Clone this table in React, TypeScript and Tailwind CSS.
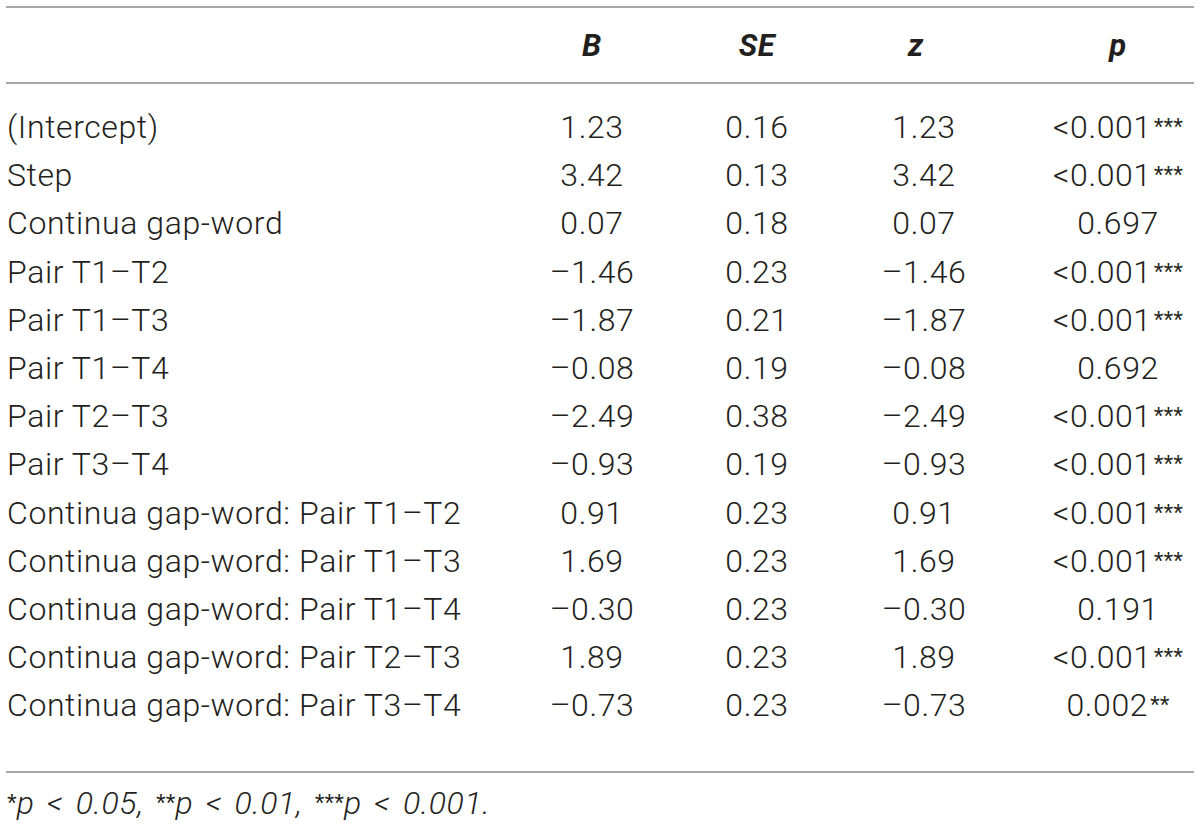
import React from "react";

type Row = { label: string; b: string; se: string; z: string; p: string; stars?: string };

const rows: Row[] = [
  { label: "(Intercept)", b: "1.23", se: "0.16", z: "1.23", p: "<0.001", stars: "***" },
  { label: "Step", b: "3.42", se: "0.13", z: "3.42", p: "<0.001", stars: "***" },
  { label: "Continua gap-word", b: "0.07", se: "0.18", z: "0.07", p: "0.697" },
  { label: "Pair T1–T2", b: "–1.46", se: "0.23", z: "–1.46", p: "<0.001", stars: "***" },
  { label: "Pair T1–T3", b: "–1.87", se: "0.21", z: "–1.87", p: "<0.001", stars: "***" },
  { label: "Pair T1–T4", b: "–0.08", se: "0.19", z: "–0.08", p: "0.692" },
  { label: "Pair T2–T3", b: "–2.49", se: "0.38", z: "–2.49", p: "<0.001", stars: "***" },
  { label: "Pair T3–T4", b: "–0.93", se: "0.19", z: "–0.93", p: "<0.001", stars: "***" },
  { label: "Continua gap-word: Pair T1–T2", b: "0.91", se: "0.23", z: "0.91", p: "<0.001", stars: "***" },
  { label: "Continua gap-word: Pair T1–T3", b: "1.69", se: "0.23", z: "1.69", p: "<0.001", stars: "***" },
  { label: "Continua gap-word: Pair T1–T4", b: "–0.30", se: "0.23", z: "–0.30", p: "0.191" },
  { label: "Continua gap-word: Pair T2–T3", b: "1.89", se: "0.23", z: "1.89", p: "<0.001", stars: "***" },
  { label: "Continua gap-word: Pair T3–T4", b: "–0.73", se: "0.23", z: "–0.73", p: "0.002", stars: "**" },
];

const grid = "grid grid-cols-[504px_164px_166px_168px_186px] items-center";

// asterisks are drawn in Arial-metric font, Roboto's are too small
const Stars: React.FC<{ s: string; className?: string }> = ({ s, className = "" }) => (
  <sup className={`font-['Liberation_Sans',sans-serif] not-italic font-normal text-[25px] relative -top-[2px] tracking-[0px] ${className}`}>
    {s}
  </sup>
);

const App: React.FC = () => {
  return (
    <div className="w-[1200px] h-[826px] bg-white text-[#231f20] font-['Roboto','Liberation_Sans',sans-serif] font-light text-[32px] tracking-[0.6px] leading-none px-[6px] pt-[6px]">
      <div className="border-t-2 border-[#a7a7a7]">
        <div className={`${grid} h-[74px] font-bold italic text-[31px]`}>
          <div></div>
          <div className="text-center">B</div>
          <div className="text-center">SE</div>
          <div className="text-center pr-[16px]">z</div>
          <div className="text-center pl-[34px]">p</div>
        </div>
      </div>
      <div className="border-t-2 border-[#a7a7a7] pt-[19px] pb-[42px]">
        {rows.map(row => (
          <div className={`${grid} h-[48.2px]`} key={row.label}>
            <div className="pl-[1px]">{row.label}</div>
            <div className="text-center">{row.b}</div>
            <div className="text-center">{row.se}</div>
            <div className="text-center">{row.z}</div>
            <div className="text-center pl-[34px]">
              {row.p}
              {row.stars && <Stars s={row.stars} className="ml-[2px]" />}
            </div>
          </div>
        ))}
      </div>
      <div className="border-t-2 border-[#a7a7a7] pt-[14px] pl-[1px] italic tracking-[0.6px] [word-spacing:4px]">
        <Stars s="*" />p &lt; 0.05, <Stars s="**" />p &lt; 0.01, <Stars s="***" />p &lt; 0.001.
      </div>
    </div>
  );
};

export default App;
